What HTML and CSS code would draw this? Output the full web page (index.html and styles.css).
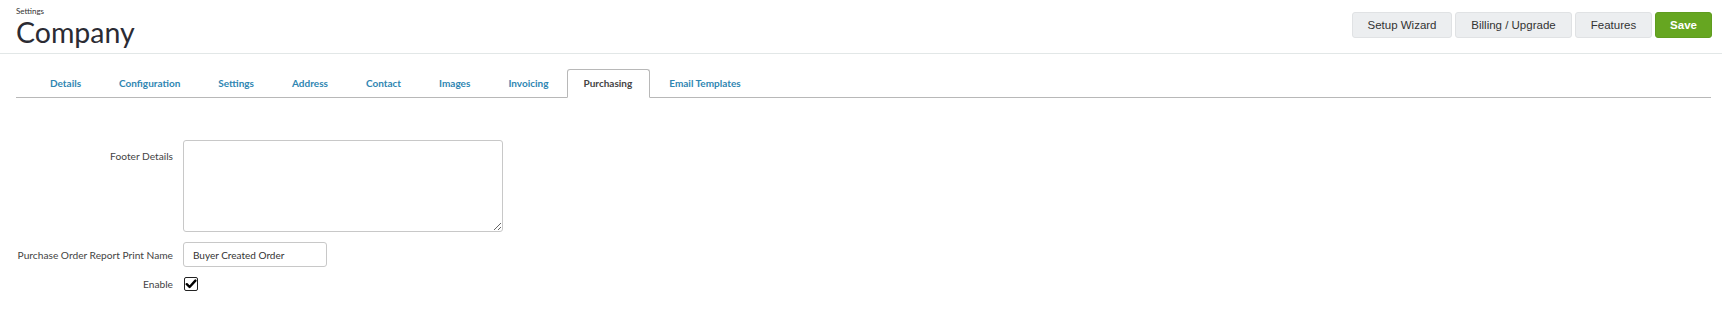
FILE: index.html
```html
<!DOCTYPE html>
<html lang="en">
<head>
    <meta charset="UTF-8">
    <title>Company Settings</title>
    <link rel="stylesheet" href="styles.css">
</head>
<body>
    <header class="page-header">
        <div class="title-block">
            <div class="breadcrumb">Settings</div>
            <h1>Company</h1>
        </div>
        <div class="header-actions">
            <button class="btn">Setup Wizard</button>
            <button class="btn">Billing / Upgrade</button>
            <button class="btn">Features</button>
            <button class="btn btn-save">Save</button>
        </div>
    </header>

    <main class="content">
        <ul class="tabs">
            <li>Details</li>
            <li>Configuration</li>
            <li>Settings</li>
            <li>Address</li>
            <li>Contact</li>
            <li>Images</li>
            <li>Invoicing</li>
            <li class="active">Purchasing</li>
            <li>Email Templates</li>
        </ul>

        <form class="settings-form">
            <div class="form-row">
                <label class="form-label top">Footer Details</label>
                <textarea class="footer-text"></textarea>
            </div>
            <div class="form-row center">
                <label class="form-label">Purchase Order Report Print Name</label>
                <input type="text" class="text-input" value="Buyer Created Order">
            </div>
            <div class="form-row center">
                <label class="form-label">Enable</label>
                <span class="checkbox">
                    <svg width="12" height="12" viewBox="0 0 12 12"><path d="M1.8 6.2 L4.6 9 L10.4 2.6" fill="none" stroke="#000" stroke-width="2.4" stroke-linecap="round" stroke-linejoin="round"/></svg>
                </span>
            </div>
        </form>
    </main>
</body>
</html>
```

FILE: styles.css
```css
/* Base */
body {
    margin: 0;
    font-family: 'Lato', 'Open Sans', sans-serif;
    color: #333;
    background-color: #fff;
}

/* Page header */
.page-header {
    display: flex;
    justify-content: space-between;
    align-items: flex-start;
    height: 53px;
    padding: 0 10px 0 16px;
    border-bottom: 1px solid #e2e7e7;
}

.breadcrumb {
    margin-top: 6px;
    font-size: 8px;
    color: #333;
}

.page-header h1 {
    margin: 0;
    font-size: 28.5px;
    font-weight: 400;
    line-height: 32px;
    color: #2b2b33;
}

.header-actions {
    display: flex;
    gap: 3px;
    margin-top: 12px;
}

.btn {
    height: 26px;
    padding: 0 4px;
    border: 1px solid #e0e2e4;
    border-radius: 3px;
    background-color: #eceef0;
    color: #333;
    font-family: 'Liberation Sans', Arial, sans-serif;
    font-size: 11.5px;
    white-space: nowrap;
    cursor: pointer;
}

.header-actions .btn:nth-child(1) { width: 100px; }
.header-actions .btn:nth-child(2) { width: 117px; }
.header-actions .btn:nth-child(3) { width: 77px; }

.btn-save {
    width: 57px;
    background-color: #66a621;
    border-color: #5f9c1f;
    color: #fff;
    font-weight: bold;
}

/* Tabs */
.content {
    padding: 15px 11px 0 16px;
}

.tabs {
    display: flex;
    margin: 0;
    padding: 0 0 0 15px;
    list-style: none;
    border-bottom: 1px solid #b8b8b8;
}

.tabs li {
    height: 27px;
    line-height: 27px;
    padding: 0 18px;
    margin-bottom: -1px;
    font-size: 10px;
    font-weight: 700;
    color: #2f86b2;
    border: 1px solid transparent;
    border-bottom: none;
}

.tabs li.active {
    color: #444;
    background-color: #fff;
    border-color: #b8b8b8;
    border-bottom: 1px solid #fff;
    border-radius: 3px 3px 0 0;
    padding: 0 17px 0 15px;
}

/* Form */
.settings-form {
    padding-top: 42px;
}

.form-row {
    display: flex;
    align-items: flex-start;
    margin-bottom: 10px;
}

.form-row.center {
    align-items: center;
}

.form-label {
    width: 157px;
    padding-right: 10px;
    text-align: right;
    font-size: 10.2px;
    color: #444;
}

.form-label.top {
    padding-top: 10px;
}

.footer-text {
    width: 320px;
    height: 92px;
    box-sizing: border-box;
    margin: 0;
    border: 1px solid #c8c8c8;
    border-radius: 3px;
    font-family: inherit;
}

.text-input {
    width: 144px;
    height: 25px;
    box-sizing: border-box;
    margin: 0;
    padding: 0 9px;
    border: 1px solid #c8c8c8;
    border-radius: 3px;
    font-family: inherit;
    font-size: 10px;
    color: #333;
}

.checkbox {
    display: flex;
    align-items: center;
    justify-content: center;
    width: 14px;
    height: 14px;
    box-sizing: border-box;
    margin-left: 1px;
    border: 1.5px solid #222;
    border-radius: 2px;
}
```
